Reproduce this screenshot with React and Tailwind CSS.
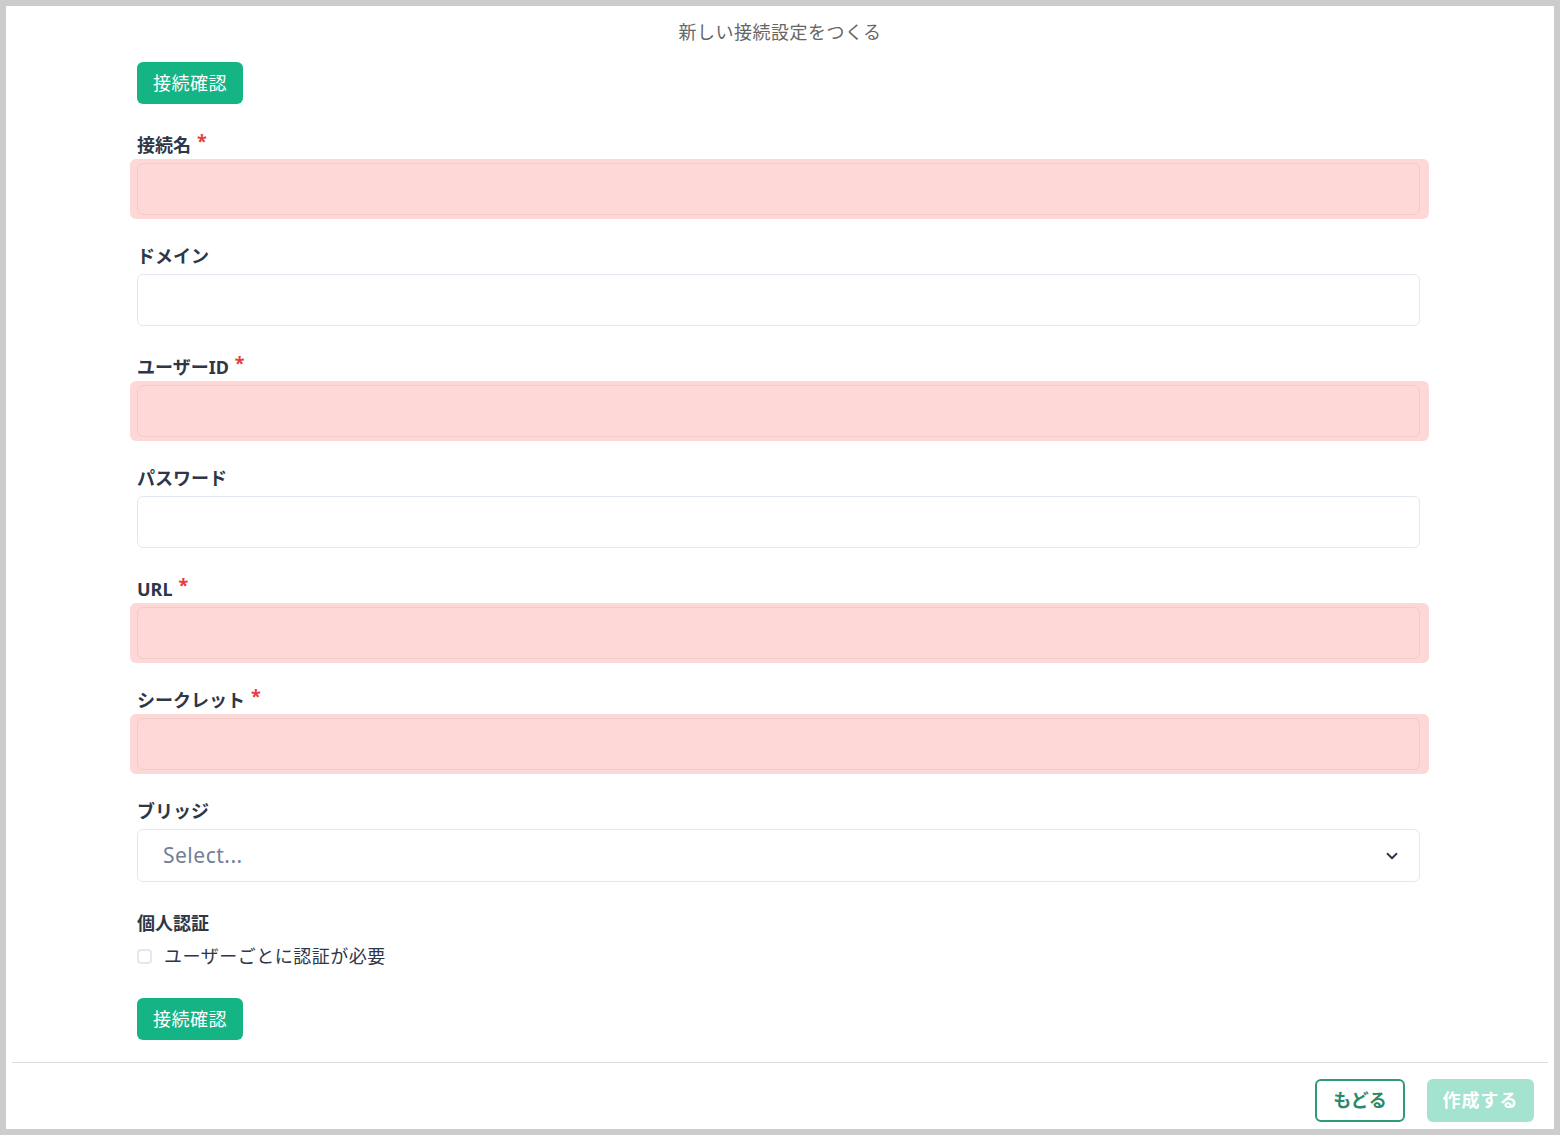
import { ChevronDown } from "lucide-react";

const fields = [
    { label: "接続名", required: true },
    { label: "ドメイン", required: false },
    { label: "ユーザーID", required: true },
    { label: "パスワード", required: false },
    { label: "URL", required: true },
    { label: "シークレット", required: true },
];

// Label with optional red asterisk
const FieldLabel = ({ label, required }) => (
    <div className="flex items-start h-6 mb-[6px] text-[18px] leading-6 font-bold text-[#2d3748]">
        <span>{label}</span>
        {required && <span className="ml-[6px] text-[18px] leading-4 font-bold text-[#e53e3e]">*</span>}
    </div>
);

const Field = ({ label, required }) => (
    <div className="mt-[29px]">
        <FieldLabel label={label} required={required} />
        {required ? (
            // Invalid field: pink wrapper around the input
            <div className="-ml-[7px] -mr-[9px] -my-1 py-1 pl-[7px] pr-[9px] rounded-md bg-[#fed7d7]">
                <div className="h-[52px] rounded-md border border-[#f1caca]"></div>
            </div>
        ) : (
            <div className="h-[52px] rounded-md border border-[#e2e8f0] bg-white"></div>
        )}
    </div>
);

const App = () => {
    return (
        <div className="w-full h-[1135px] bg-[#cccccc] p-[6px] font-['Noto_Sans','Noto_Sans_CJK_JP',sans-serif]">
            <div className="w-full h-full bg-white flex flex-col">
                {/* Title */}
                <div className="pt-[13px] text-center text-[18px] leading-[26px] text-[#666666] tracking-[0.5px]">
                    新しい接続設定をつくる
                </div>

                {/* Form */}
                <div className="pl-[131px] pr-[134px] flex-1">
                    <button className="mt-[17px] h-[42px] px-4 rounded-md bg-[#14b485] text-white text-[18px] tracking-[0.5px]">
                        接続確認
                    </button>

                    {fields.map(f => (
                        <Field key={f.label} label={f.label} required={f.required} />
                    ))}

                    {/* Bridge select */}
                    <div className="mt-[29px]">
                        <FieldLabel label="ブリッジ" />
                        <div className="h-[53px] rounded-md border border-[#e2e8f0] flex items-center justify-between pl-[25px] pr-[18px]">
                            <span className="text-[21px] text-[#718096] tracking-[0.5px]">Select...</span>
                            <ChevronDown size={18} strokeWidth={2.5} className="text-[#2d3748]" />
                        </div>
                    </div>

                    {/* Personal auth */}
                    <div className="mt-[29px]">
                        <div className="text-[18px] leading-6 font-bold text-[#2d3748]">個人認証</div>
                        <label className="mt-[9px] flex items-center h-6 gap-3 text-[18px] text-[#2d3748] tracking-[0.5px]">
                            <span className="w-[15px] h-[15px] rounded-sm border-2 border-[#e2e8f0]"></span>
                            ユーザーごとに認証が必要
                        </label>
                    </div>

                    <button className="mt-[30px] h-[42px] px-4 rounded-md bg-[#14b485] text-white text-[18px] tracking-[0.5px]">
                        接続確認
                    </button>
                </div>

                {/* Footer */}
                <div className="mx-[6px] border-t border-[#dddddd]"></div>
                <div className="flex justify-end gap-[22px] pt-4 pb-[7px] pr-5">
                    <button className="h-[43px] w-[90px] rounded-md border-2 border-[#2f9a74] text-[#2a8a66] text-[18px] font-bold">
                        もどる
                    </button>
                    <button className="h-[43px] w-[107px] rounded-md bg-[#a4e3d0] text-white text-[18px] font-bold tracking-[1px]">
                        作成する
                    </button>
                </div>
            </div>
        </div>
    );
};

export default App;
